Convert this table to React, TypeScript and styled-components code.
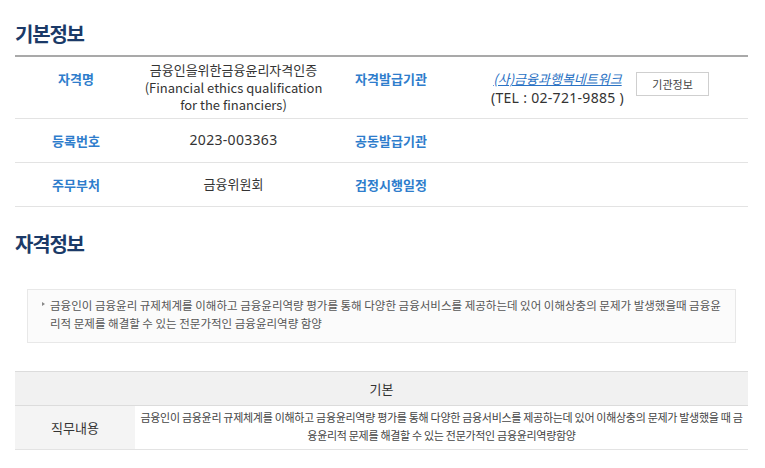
import React from 'react';
import styled, { createGlobalStyle } from 'styled-components';

const GlobalStyle = createGlobalStyle`
  body {
    margin: 0;
    background: #fff;
    font-family: 'Noto Sans CJK KR', 'Noto Sans', sans-serif;
    color: #333;
  }
`;

const Page = styled.div`
  padding: 0 17px 0 15px;
`;

const SectionTitle = styled.h2<{ top: number }>`
  margin: ${({ top }) => top}px 0 0;
  font-size: 20px;
  line-height: 24px;
  font-weight: 700;
  color: #1b3a68;
  letter-spacing: -1.2px;
`;

const InfoTable = styled.div`
  margin-top: 9px;
  border-top: 2px solid #a9a9a9;
`;

const InfoRow = styled.div<{ height?: number }>`
  display: grid;
  grid-template-columns: 122px 193px 122px 1fr;
  min-height: ${({ height }) => height ?? 43}px;
  border-bottom: 1px solid #e3e3e3;
`;

const Label = styled.div<{ top?: number }>`
  display: flex;
  justify-content: center;
  align-items: ${({ top }) => (top === undefined ? 'center' : 'flex-start')};
  padding-top: ${({ top }) => top ?? 0}px;
  font-size: 13px;
  font-weight: 600;
  color: #2e7dcc;
`;

const Value = styled.div`
  display: flex;
  justify-content: center;
  align-items: center;
  padding: 4px 4px;
  text-align: center;
  font-size: 13px;
  line-height: 17.5px;
  color: #333;
`;

const Num = styled.span`
  font-family: 'Noto Sans', sans-serif;
  font-size: 14px;
  letter-spacing: 0.3px;
`;

const Issuer = styled.div`
  display: flex;
  justify-content: center;
  align-items: flex-start;
  gap: 12px;
  padding-top: 12px;
`;

const IssuerText = styled.div`
  text-align: center;
  font-size: 13px;
  line-height: 19px;
  color: #333;
`;

const IssuerLink = styled.a`
  color: #2a72c4;
  font-style: italic;
  text-decoration: underline;
  cursor: pointer;
`;

const InfoButton = styled.button`
  margin-top: 3px;
  width: 73px;
  height: 24px;
  border: 1px solid #cfcfcf;
  background: #fff;
  font-family: inherit;
  font-size: 11px;
  color: #444;
  cursor: pointer;
`;

const SummaryBox = styled.div`
  margin: 33px 12px 0 12px;
  padding: 6px 10px 10px 14px;
  background: #fbfbfb;
  border: 1px solid #e8e8e8;
  display: flex;
  gap: 5px;
`;

const Bullet = styled.span`
  flex: none;
  margin-top: 6px;
  width: 0;
  height: 0;
  border-left: 3px solid #888;
  border-top: 2.5px solid transparent;
  border-bottom: 2.5px solid transparent;
`;

const SummaryText = styled.p`
  margin: 0;
  font-size: 11.5px;
  line-height: 18px;
  color: #555;
`;

const DutyTable = styled.div`
  margin-top: 28px;
  border-top: 1px solid #dcdcdc;
`;

const DutyHead = styled.div`
  height: 33px;
  display: flex;
  align-items: center;
  justify-content: center;
  background: #f1f1f1;
  border-bottom: 1px solid #dcdcdc;
  font-size: 13px;
  color: #333;
`;

const DutyRow = styled.div`
  display: grid;
  grid-template-columns: 120px 1fr;
  min-height: 43px;
  border-bottom: 1px solid #e3e3e3;
`;

const DutyLabel = styled.div`
  display: flex;
  align-items: center;
  justify-content: center;
  background: #f4f4f4;
  font-size: 13px;
  color: #333;
`;

const DutyText = styled.div`
  padding: 2px 2px 5px;
  text-align: center;
  font-size: 11px;
  line-height: 18px;
  letter-spacing: -0.3px;
  color: #444;
`;

const duty =
  '금융인이 금융윤리 규제체계를 이해하고 금융윤리역량 평가를 통해 다양한 금융서비스를 제공하는데 있어 이해상충의 문제가 발생했을 때 금융윤리적 문제를 해결할 수 있는 전문가적인 금융윤리역량함양';

const summary =
  '금융인이 금융윤리 규제체계를 이해하고 금융윤리역량 평가를 통해 다양한 금융서비스를 제공하는데 있어 이해상충의 문제가 발생했을때 금융윤리적 문제를 해결할 수 있는 전문가적인 금융윤리역량 함양';

const App = () => {
  return (
    <>
      <GlobalStyle />
      <Page>
        <SectionTitle top={22}>기본정보</SectionTitle>
        <InfoTable>
          <InfoRow height={60}>
            <Label top={12}>자격명</Label>
            <Value>
              금융인을위한금융윤리자격인증
              <br />
              (Financial ethics qualification
              <br />
              for the financiers)
            </Value>
            <Label top={12}>자격발급기관</Label>
            <Issuer>
              <IssuerText>
                <IssuerLink>(사)금융과행복네트워크</IssuerLink>
                <br />
                <Num>(TEL : 02-721-9885 )</Num>
              </IssuerText>
              <InfoButton>기관정보</InfoButton>
            </Issuer>
          </InfoRow>
          <InfoRow>
            <Label>등록번호</Label>
            <Value>
              <Num>2023-003363</Num>
            </Value>
            <Label>공동발급기관</Label>
            <Value />
          </InfoRow>
          <InfoRow>
            <Label>주무부처</Label>
            <Value>금융위원회</Value>
            <Label>검정시행일정</Label>
            <Value />
          </InfoRow>
        </InfoTable>

        <SectionTitle top={25}>자격정보</SectionTitle>
        <SummaryBox>
          <Bullet />
          <SummaryText>{summary}</SummaryText>
        </SummaryBox>

        <DutyTable>
          <DutyHead>기본</DutyHead>
          <DutyRow>
            <DutyLabel>직무내용</DutyLabel>
            <DutyText>{duty}</DutyText>
          </DutyRow>
        </DutyTable>
      </Page>
    </>
  );
};

export default App;
